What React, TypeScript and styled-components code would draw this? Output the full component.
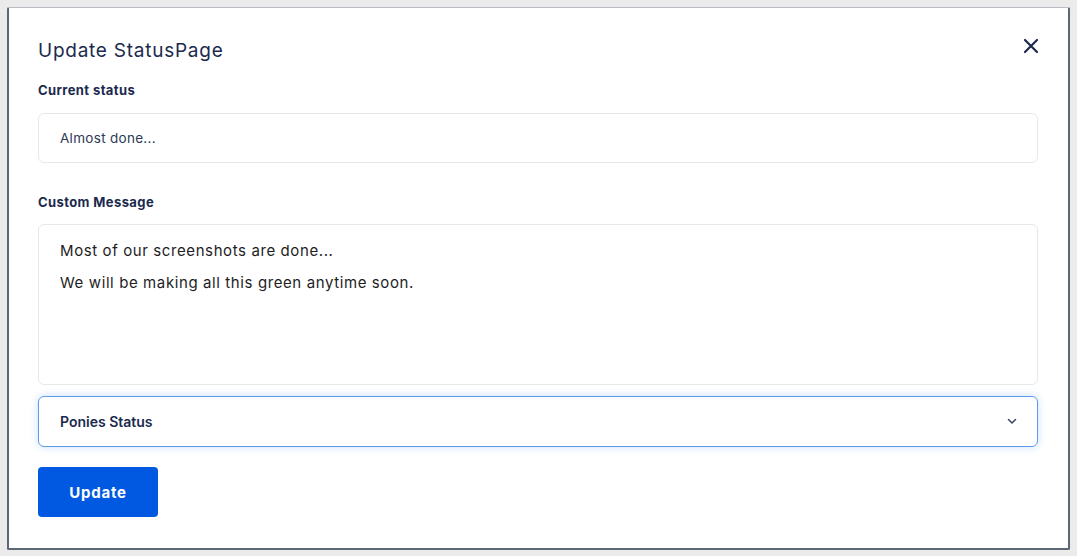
import { FC } from 'react'
import styled, { createGlobalStyle } from 'styled-components'

const GlobalStyle = createGlobalStyle`
  html, body {
    margin: 0;
    padding: 0;
    background: #ebebec;
    font-family: Inter, 'Noto Sans', sans-serif;
  }
`

const CloseIcon: FC = () => (
  <svg width='16' height='16' viewBox='0 0 16 16' fill='none'>
    <path d='M2 2L14 14M14 2L2 14' stroke='#1b2a4e' strokeWidth='2.2' strokeLinecap='round' />
  </svg>
)

const ChevronIcon: FC = () => (
  <svg width='10' height='7' viewBox='0 0 10 7' fill='none'>
    <path d='M1.5 1.5L5 5L8.5 1.5' stroke='#3d4a66' strokeWidth='1.6' strokeLinecap='round' strokeLinejoin='round' />
  </svg>
)

const App: FC = () => {
  return (
    <>
      <GlobalStyle />
      <Page>
        <Modal>
          <Header>
            <Title>Update StatusPage</Title>
            <CloseButton aria-label='close'>
              <CloseIcon />
            </CloseButton>
          </Header>
          <Label>Current status</Label>
          <Field>Almost done...</Field>
          <Label $spaced>Custom Message</Label>
          <MessageBox>
            <p>Most of our screenshots are done...</p>
            <p>We will be making all this green anytime soon.</p>
          </MessageBox>
          <Select>
            <span>Ponies Status</span>
            <ChevronIcon />
          </Select>
          <Button>Update</Button>
        </Modal>
      </Page>
    </>
  )
}

export default App

const Page = styled.div`
  padding: 7px 7px 6px 7px;
  height: 556px;
  box-sizing: border-box;
`

const Modal = styled.div`
  box-sizing: border-box;
  height: 543px;
  display: flex;
  flex-direction: column;
  background: #ffffff;
  border: 2px solid #5d6675;
  border-top: 1px solid #b9bdc4;
  border-radius: 2px;
  padding: 28px 30px 0 29px;
  color: #1b2a4e;
`

const Header = styled.div`
  display: flex;
  justify-content: space-between;
  align-items: center;
  height: 28px;
`

const Title = styled.h2`
  margin: 0;
  font-size: 19px;
  font-weight: 400;
  letter-spacing: 0.75px;
  color: #1b2a4e;
`

const CloseButton = styled.button`
  display: flex;
  align-items: center;
  justify-content: center;
  background: none;
  border: none;
  padding: 0;
  margin-right: -1px;
  margin-top: -8px;
  cursor: pointer;
`

const Label = styled.div<{ $spaced?: boolean }>`
  margin-top: ${({ $spaced }) => ($spaced ? '31px' : '18px')};
  font-size: 13px;
  font-weight: 700;
  letter-spacing: 0.4px;
  color: #1b2a4e;
  line-height: 16px;
`

const Field = styled.div`
  margin-top: 15px;
  height: 50px;
  box-sizing: border-box;
  display: flex;
  align-items: center;
  padding: 0 21px;
  border: 1px solid #e6e8eb;
  border-radius: 6px;
  font-size: 13.5px;
  letter-spacing: 0.3px;
  color: #2d3a55;
`

const MessageBox = styled.div`
  margin-top: 14px;
  height: 161px;
  box-sizing: border-box;
  padding: 16px 21px;
  border: 1px solid #e6e8eb;
  border-radius: 6px;
  font-size: 15px;
  letter-spacing: 0.6px;
  color: #1d1d24;

  p {
    margin: 0 0 13px;
    line-height: 19px;
  }
`

const Select = styled.div`
  margin-top: 11px;
  height: 51px;
  box-sizing: border-box;
  display: flex;
  align-items: center;
  justify-content: space-between;
  padding: 0 20px 0 21px;
  border: 1.5px solid #5d9be6;
  border-radius: 6px;
  box-shadow: 0 0 8px rgba(80, 150, 240, 0.3);
  font-size: 14px;
  font-weight: 600;
  color: #1b2a4e;
`

const Button = styled.button`
  margin-top: 20px;
  width: 120px;
  height: 50px;
  border: none;
  border-radius: 4px;
  background: #0059e0;
  color: #ffffff;
  font-family: inherit;
  font-size: 15px;
  font-weight: 700;
  letter-spacing: 0.8px;
  cursor: pointer;
`
